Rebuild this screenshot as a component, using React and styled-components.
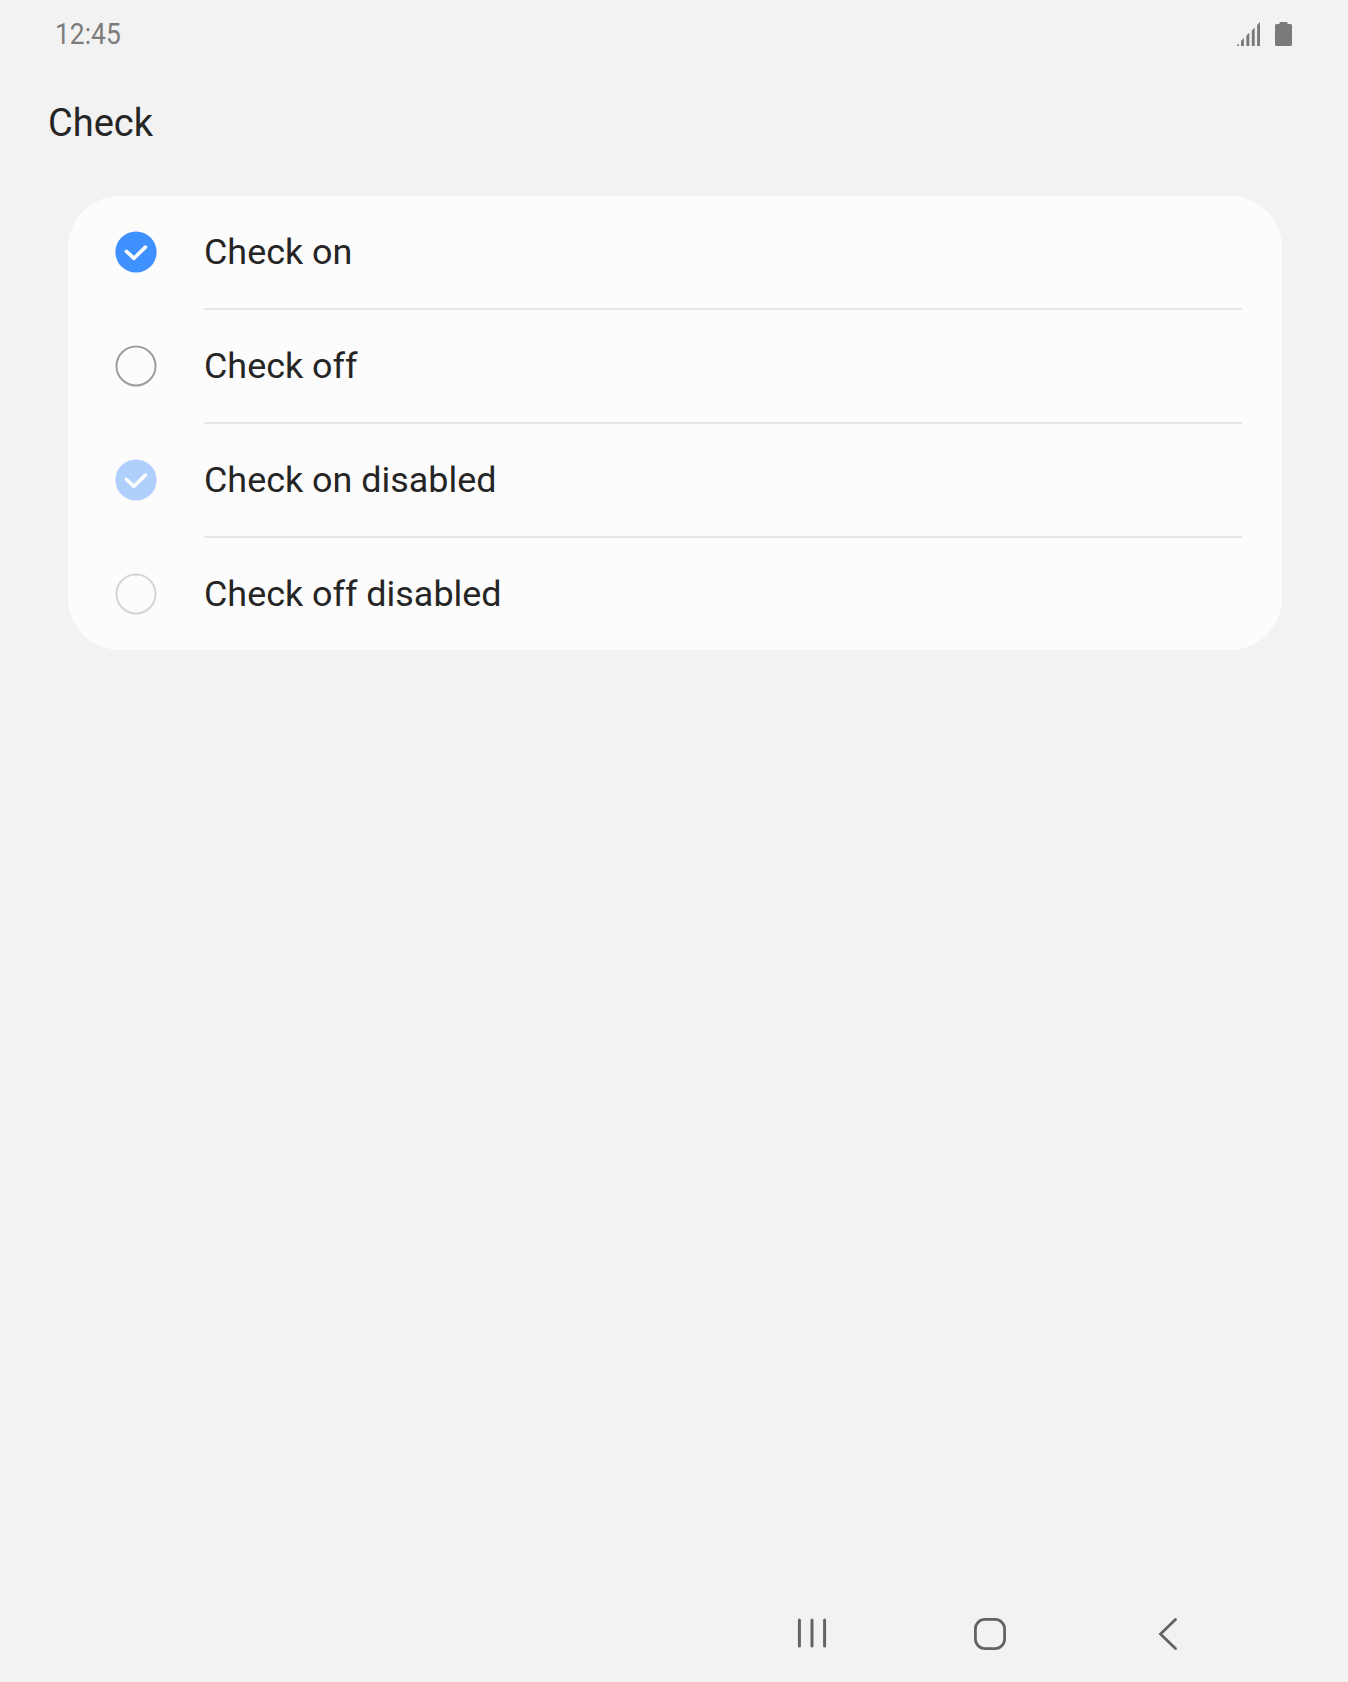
import React from 'react';
import styled, { createGlobalStyle } from 'styled-components';

const GlobalStyle = createGlobalStyle`
  * { box-sizing: border-box; }
  html, body { margin: 0; padding: 0; background: #f2f2f2; }
`;

const Screen = styled.div`
  width: 1348px;
  height: 1682px;
  display: flex;
  flex-direction: column;
  background: #f2f2f2;
  color: #252525;
  font-family: Roboto, 'Liberation Sans', sans-serif;
  overflow: hidden;
`;

const StatusBar = styled.header`
  height: 68px;
  display: flex;
  align-items: center;
  justify-content: space-between;
  padding: 0 56px 0 55px;
`;

const Clock = styled.time`
  color: #7c7c7c;
  font-size: 30px;
  line-height: 36px;
  white-space: nowrap;
  transform: scaleX(0.88);
  transform-origin: left center;
`;

const StatusIcons = styled.div`
  display: flex;
  gap: 15px;
`;

const Title = styled.h1`
  height: 128px;
  margin: 0;
  padding: 32px 0 0 48px;
  font-size: 38px;
  font-weight: 400;
  line-height: 46px;
`;

const Card = styled.ul`
  margin: 0 66px 0 68px;
  padding: 0 40px;
  list-style: none;
  background: #fcfcfc;
  border-radius: 52px;
`;

const Row = styled.li`
  display: flex;
  padding-left: 7px;
`;

const CheckBox = styled.span`
  flex: none;
  width: 42px;
  height: 112px;
  display: flex;
  align-items: center;
  opacity: ${({ $disabled }) => ($disabled ? 0.4 : 1)};
`;

const Label = styled.span`
  flex: 1;
  height: ${({ $divided }) => ($divided ? 114 : 112)}px;
  margin-left: 47px;
  border-bottom: ${({ $divided }) => ($divided ? '2px solid #e6e6e6' : 'none')};
  font-size: 35.9px;
  line-height: 113px;
  white-space: nowrap;
`;

const NavBar = styled.nav`
  height: 96px;
  margin-top: auto;
  display: flex;
  justify-content: flex-end;
  align-items: center;
  padding-right: 91px;
`;

const NavButton = styled.button`
  width: 178px;
  height: 96px;
  padding: 0;
  border: 0;
  background: none;
  display: flex;
  align-items: center;
  justify-content: center;
`;

const SignalIcon = () => (
  <svg width="24" height="24" viewBox="0 0 24 24" fill="#7a7a7a">
    <path d="M.2 24 2.7 21.6V24ZM5 24V19L7.9 16.1V24ZM10.4 24V13.6L13.3 10.7V24ZM15.8 24V8.4L18.7 5.5V24ZM21.1 24V2.9L24 0V24Z" />
  </svg>
);

const BatteryIcon = () => (
  <svg width="17" height="24" viewBox="0 0 17 24" fill="#7a7a7a">
    <path d="M5.5 0H11.5Q12.5 0 12.5 1V2H15.5Q17 2 17 3.5V22.5Q17 24 15.5 24H1.5Q0 24 0 22.5V3.5Q0 2 1.5 2H4.5V1Q4.5 0 5.5 0Z" />
  </svg>
);

const CheckMark = ({ checked, disabled }) => (
  <svg width="42" height="42" viewBox="0 0 42 42" fill="none">
    {checked ? (
      <>
        <circle cx="21" cy="21" r="20.6" fill="#3e91ff" />
        <path
          d="M11.4 20.4 19 27.3 30.4 16.1"
          stroke={disabled ? '#fff' : '#fcfcfc'}
          strokeWidth="3.6"
          strokeLinecap="round"
          strokeLinejoin="round"
        />
      </>
    ) : (
      <circle cx="21" cy="21" r="19.5" stroke="#9c9c9c" strokeWidth="2" />
    )}
  </svg>
);

const RecentsIcon = () => (
  <svg width="32" height="32" viewBox="0 0 32 32" stroke="#636363" strokeWidth="3" strokeLinecap="round">
    <path d="M3.4 2.5V28.5M16 2.5V28.5M28.6 2.5V28.5" transform="translate(0 -.5)" />
  </svg>
);

const HomeIcon = () => (
  <svg width="34" height="34" viewBox="0 0 34 34" fill="none" stroke="#636363" strokeWidth="2.8">
    <rect x="2.4" y="2.4" width="29.2" height="29.2" rx="9.5" />
  </svg>
);

const BackIcon = () => (
  <svg width="34" height="34" viewBox="0 0 34 34" fill="none" stroke="#636363" strokeWidth="2.8" strokeLinecap="round">
    <path d="M24.5 2.5 9.5 17 24.5 31.5" />
  </svg>
);

const options = [
  { label: 'Check on', checked: true, disabled: false },
  { label: 'Check off', checked: false, disabled: false },
  { label: 'Check on disabled', checked: true, disabled: true },
  { label: 'Check off disabled', checked: false, disabled: true },
];

export default function App() {
  return (
    <Screen>
      <GlobalStyle />
      <StatusBar>
        <Clock>12:45</Clock>
        <StatusIcons>
          <SignalIcon />
          <BatteryIcon />
        </StatusIcons>
      </StatusBar>
      <Title>Check</Title>
      <Card>
        {options.map(({ label, checked, disabled }, i) => (
          <Row key={label}>
            <CheckBox role="checkbox" aria-checked={checked} aria-disabled={disabled} $disabled={disabled}>
              <CheckMark checked={checked} disabled={disabled} />
            </CheckBox>
            <Label $divided={i < options.length - 1}>{label}</Label>
          </Row>
        ))}
      </Card>
      <NavBar>
        <NavButton aria-label="Recents"><RecentsIcon /></NavButton>
        <NavButton aria-label="Home"><HomeIcon /></NavButton>
        <NavButton aria-label="Back"><BackIcon /></NavButton>
      </NavBar>
    </Screen>
  );
}
